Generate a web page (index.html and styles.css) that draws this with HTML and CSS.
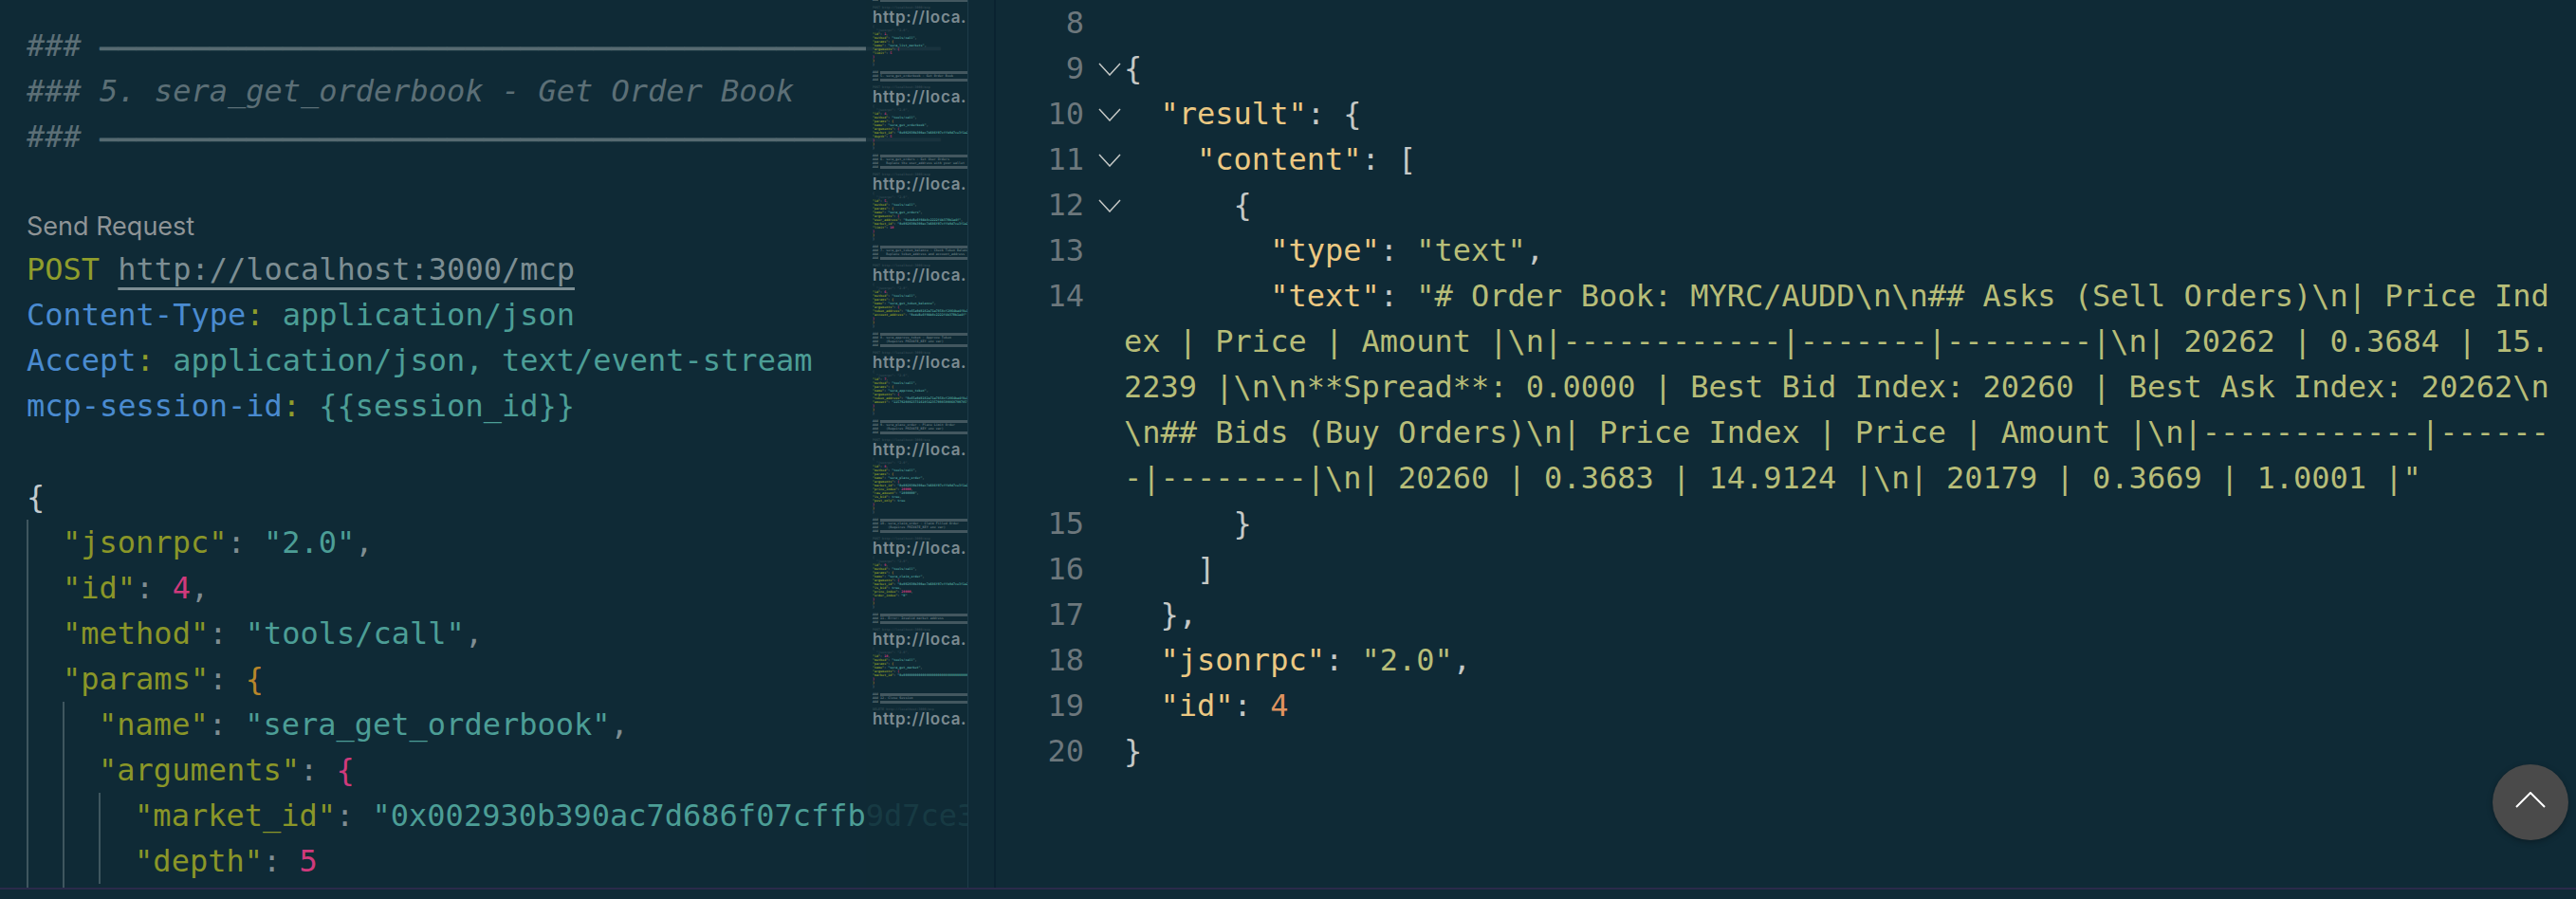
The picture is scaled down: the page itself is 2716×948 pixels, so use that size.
FILE: index.html
```html
<!DOCTYPE html>
<html lang="en">
<head>
<meta charset="utf-8">
<title>orderbook request</title>
<link rel="stylesheet" href="styles.css">
</head>
<body>
<div class="app">
  <main class="panes">
    <section class="pane-left">
      <div class="code">
        <div class="line cm">### <span class="rule">──────────────────────────────────────────────</span></div>
        <div class="line cm">### 5. sera_get_orderbook - Get Order Book</div>
        <div class="line cm">### <span class="rule">──────────────────────────────────────────────</span></div>
        <div class="line"></div>
        <div class="lens">Send Request</div>
        <div class="line"><span class="verb">POST</span> <span class="url">http://localhost:3000/mcp</span></div>
        <div class="line"><span class="hn">Content-Type</span><span class="hc">:</span> <span class="s">application/json</span></div>
        <div class="line"><span class="hn">Accept</span><span class="hc">:</span> <span class="s">application/json, text/event-stream</span></div>
        <div class="line"><span class="hn">mcp-session-id</span><span class="hc">:</span> <span class="s">{{session_id}}</span></div>
        <div class="line"></div>
        <div class="line"><span class="b0">{</span></div>
        <div class="guide">
          <div class="line"><span class="k">"jsonrpc"</span><span class="p">:</span> <span class="s">"2.0"</span><span class="p">,</span></div>
          <div class="line"><span class="k">"id"</span><span class="p">:</span> <span class="n">4</span><span class="p">,</span></div>
          <div class="line"><span class="k">"method"</span><span class="p">:</span> <span class="s">"tools/call"</span><span class="p">,</span></div>
          <div class="line"><span class="k">"params"</span><span class="p">:</span> <span class="b1">{</span></div>
          <div class="guide">
            <div class="line"><span class="k">"name"</span><span class="p">:</span> <span class="s">"sera_get_orderbook"</span><span class="p">,</span></div>
            <div class="line"><span class="k">"arguments"</span><span class="p">:</span> <span class="b2">{</span></div>
            <div class="guide">
              <div class="line"><span class="k">"market_id"</span><span class="p">:</span> <span class="s">"0x002930b390ac7d686f07cffb9d7ce3f1a2b4c5d6"</span><span class="p">,</span></div>
              <div class="line"><span class="k">"depth"</span><span class="p">:</span> <span class="n">5</span></div>
            </div>
            <div class="line"><span class="b2">}</span></div>
          </div>
          <div class="line"><span class="b1">}</span></div>
        </div>
      </div>

      <aside class="minimap">
        <div class="mm-inner">
          <div class="ml mc">### <span class="bar"></span></div>
          <div class="ml"></div>
          <div class="ml dim">POST http://localhost:3000/mcp</div>
          <div class="mm-link">http://loca.</div>
          <div class="ml dim">{</div>
          <div class="ml dim">  "jsonrpc": "2.0",</div>
          <div class="ml">  <span class="k">"id"</span>: <span class="n">1</span>,</div>
          <div class="ml">  <span class="k">"method"</span>: <span class="s">"tools/call"</span>,</div>
          <div class="ml">  <span class="k">"params"</span>: <span class="b1">{</span></div>
          <div class="ml">    <span class="k">"name"</span>: <span class="s">"sera_list_markets"</span>,</div>
          <div class="ml">    <span class="k">"arguments"</span>: <span class="b2">{</span></div>
          <div class="ml">      <span class="k">"limit"</span>: <span class="n">5</span></div>
          <div class="ml">    <span class="b2">}</span></div>
          <div class="ml">  <span class="b1">}</span></div>
          <div class="ml mc">}</div>
          <div class="ml"></div>

          <div class="ml mc">### <span class="bar"></span></div>
          <div class="ml mc">### 5. sera_get_orderbook - Get Order Book</div>
          <div class="ml mc">### <span class="bar"></span></div>
          <div class="ml"></div>
          <div class="ml dim">POST http://localhost:3000/mcp</div>
          <div class="mm-link">http://loca.</div>
          <div class="ml dim">{</div>
          <div class="ml dim">  "jsonrpc": "2.0",</div>
          <div class="ml">  <span class="k">"id"</span>: <span class="n">4</span>,</div>
          <div class="ml">  <span class="k">"method"</span>: <span class="s">"tools/call"</span>,</div>
          <div class="ml">  <span class="k">"params"</span>: <span class="b1">{</span></div>
          <div class="ml">    <span class="k">"name"</span>: <span class="s">"sera_get_orderbook"</span>,</div>
          <div class="ml">    <span class="k">"arguments"</span>: <span class="b2">{</span></div>
          <div class="ml">      <span class="k">"market_id"</span>: <span class="s">"0x002930b390ac7d686f07cffb9d7ce3f1a2b4"</span>,</div>
          <div class="ml">      <span class="k">"depth"</span>: <span class="n">5</span></div>
          <div class="ml">    <span class="b2">}</span></div>
          <div class="ml">  <span class="b1">}</span></div>
          <div class="ml mc">}</div>
          <div class="ml"></div>

          <div class="ml mc">### <span class="bar"></span></div>
          <div class="ml mc">### 6. sera_get_orders - Get User Orders</div>
          <div class="ml mc">###    Replace the user_address with your wallet</div>
          <div class="ml mc">### <span class="bar"></span></div>
          <div class="ml"></div>
          <div class="ml dim">POST http://localhost:3000/mcp</div>
          <div class="mm-link">http://loca.</div>
          <div class="ml dim">{</div>
          <div class="ml dim">  "jsonrpc": "2.0",</div>
          <div class="ml">  <span class="k">"id"</span>: <span class="n">5</span>,</div>
          <div class="ml">  <span class="k">"method"</span>: <span class="s">"tools/call"</span>,</div>
          <div class="ml">  <span class="k">"params"</span>: <span class="b1">{</span></div>
          <div class="ml">    <span class="k">"name"</span>: <span class="s">"sera_get_orders"</span>,</div>
          <div class="ml">    <span class="k">"arguments"</span>: <span class="b2">{</span></div>
          <div class="ml">      <span class="k">"user_address"</span>: <span class="s">"0xdeBe6f0Ab8c2222f4b37Rb1a4f"</span>,</div>
          <div class="ml">      <span class="k">"market_id"</span>: <span class="s">"0x002930b390ac7d686f07cffb9d7ce3f1a2b4"</span>,</div>
          <div class="ml">      <span class="k">"limit"</span>: <span class="n">10</span></div>
          <div class="ml">    <span class="b2">}</span></div>
          <div class="ml">  <span class="b1">}</span></div>
          <div class="ml mc">}</div>
          <div class="ml"></div>

          <div class="ml mc">### <span class="bar"></span></div>
          <div class="ml mc">### 7. sera_get_token_balance - Check Token Balance</div>
          <div class="ml mc">###    Replace token_address and account_address</div>
          <div class="ml mc">### <span class="bar"></span></div>
          <div class="ml"></div>
          <div class="ml dim">POST http://localhost:3000/mcp</div>
          <div class="mm-link">http://loca.</div>
          <div class="ml dim">{</div>
          <div class="ml dim">  "jsonrpc": "2.0",</div>
          <div class="ml">  <span class="k">"id"</span>: <span class="n">6</span>,</div>
          <div class="ml">  <span class="k">"method"</span>: <span class="s">"tools/call"</span>,</div>
          <div class="ml">  <span class="k">"params"</span>: <span class="b1">{</span></div>
          <div class="ml">    <span class="k">"name"</span>: <span class="s">"sera_get_token_balance"</span>,</div>
          <div class="ml">    <span class="k">"arguments"</span>: <span class="b2">{</span></div>
          <div class="ml">      <span class="k">"token_address"</span>: <span class="s">"0x65a0d8182a71a7858cf2864ba4f8e1"</span>,</div>
          <div class="ml">      <span class="k">"account_address"</span>: <span class="s">"0xdeBe6f0Ab8c2222f4b37Rb1a4f"</span></div>
          <div class="ml">    <span class="b2">}</span></div>
          <div class="ml">  <span class="b1">}</span></div>
          <div class="ml mc">}</div>
          <div class="ml"></div>

          <div class="ml mc">### <span class="bar"></span></div>
          <div class="ml mc">### 8. sera_approve_token - Approve Token</div>
          <div class="ml mc">###    (Requires PRIVATE_KEY env var)</div>
          <div class="ml mc">### <span class="bar"></span></div>
          <div class="ml"></div>
          <div class="ml dim">POST http://localhost:3000/mcp</div>
          <div class="mm-link">http://loca.</div>
          <div class="ml dim">{</div>
          <div class="ml dim">  "jsonrpc": "2.0",</div>
          <div class="ml">  <span class="k">"id"</span>: <span class="n">7</span>,</div>
          <div class="ml">  <span class="k">"method"</span>: <span class="s">"tools/call"</span>,</div>
          <div class="ml">  <span class="k">"params"</span>: <span class="b1">{</span></div>
          <div class="ml">    <span class="k">"name"</span>: <span class="s">"sera_approve_token"</span>,</div>
          <div class="ml">    <span class="k">"arguments"</span>: <span class="b2">{</span></div>
          <div class="ml">      <span class="k">"token_address"</span>: <span class="s">"0x65a0d8182a71a7858cf2864ba4f8e1"</span>,</div>
          <div class="ml">      <span class="k">"amount"</span>: <span class="s">"11579208923731619542357098500868790785"</span></div>
          <div class="ml">    <span class="b2">}</span></div>
          <div class="ml">  <span class="b1">}</span></div>
          <div class="ml mc">}</div>
          <div class="ml"></div>

          <div class="ml mc">### <span class="bar"></span></div>
          <div class="ml mc">### 9. sera_place_order - Place Limit Order</div>
          <div class="ml mc">###    (Requires PRIVATE_KEY env var)</div>
          <div class="ml mc">### <span class="bar"></span></div>
          <div class="ml"></div>
          <div class="ml dim">POST http://localhost:3000/mcp</div>
          <div class="mm-link">http://loca.</div>
          <div class="ml dim">{</div>
          <div class="ml dim">  "jsonrpc": "2.0",</div>
          <div class="ml">  <span class="k">"id"</span>: <span class="n">8</span>,</div>
          <div class="ml">  <span class="k">"method"</span>: <span class="s">"tools/call"</span>,</div>
          <div class="ml">  <span class="k">"params"</span>: <span class="b1">{</span></div>
          <div class="ml">    <span class="k">"name"</span>: <span class="s">"sera_place_order"</span>,</div>
          <div class="ml">    <span class="k">"arguments"</span>: <span class="b2">{</span></div>
          <div class="ml">      <span class="k">"market_id"</span>: <span class="s">"0x002930b390ac7d686f07cffb9d7ce3f1a2b4"</span>,</div>
          <div class="ml">      <span class="k">"price_index"</span>: <span class="n">20000</span>,</div>
          <div class="ml">      <span class="k">"raw_amount"</span>: <span class="s">"1000000"</span>,</div>
          <div class="ml">      <span class="k">"is_bid"</span>: <span class="s">true</span>,</div>
          <div class="ml">      <span class="k">"post_only"</span>: <span class="s">true</span></div>
          <div class="ml">    <span class="b2">}</span></div>
          <div class="ml">  <span class="b1">}</span></div>
          <div class="ml mc">}</div>
          <div class="ml"></div>

          <div class="ml mc">### <span class="bar"></span></div>
          <div class="ml mc">### 10. sera_claim_order - Claim Filled Order</div>
          <div class="ml mc">###     (Requires PRIVATE_KEY env var)</div>
          <div class="ml mc">### <span class="bar"></span></div>
          <div class="ml"></div>
          <div class="ml dim">POST http://localhost:3000/mcp</div>
          <div class="mm-link">http://loca.</div>
          <div class="ml dim">{</div>
          <div class="ml dim">  "jsonrpc": "2.0",</div>
          <div class="ml">  <span class="k">"id"</span>: <span class="n">9</span>,</div>
          <div class="ml">  <span class="k">"method"</span>: <span class="s">"tools/call"</span>,</div>
          <div class="ml">  <span class="k">"params"</span>: <span class="b1">{</span></div>
          <div class="ml">    <span class="k">"name"</span>: <span class="s">"sera_claim_order"</span>,</div>
          <div class="ml">    <span class="k">"arguments"</span>: <span class="b2">{</span></div>
          <div class="ml">      <span class="k">"market_id"</span>: <span class="s">"0x002930b390ac7d686f07cffb9d7ce3f1a2b4"</span>,</div>
          <div class="ml">      <span class="k">"is_bid"</span>: <span class="s">true</span>,</div>
          <div class="ml">      <span class="k">"price_index"</span>: <span class="n">20000</span>,</div>
          <div class="ml">      <span class="k">"order_index"</span>: <span class="s">"0"</span></div>
          <div class="ml">    <span class="b2">}</span></div>
          <div class="ml">  <span class="b1">}</span></div>
          <div class="ml mc">}</div>
          <div class="ml"></div>

          <div class="ml mc">### <span class="bar"></span></div>
          <div class="ml mc">### 11. Error: Invalid market address</div>
          <div class="ml mc">### <span class="bar"></span></div>
          <div class="ml"></div>
          <div class="ml dim">POST http://localhost:3000/mcp</div>
          <div class="mm-link">http://loca.</div>
          <div class="ml dim">{</div>
          <div class="ml dim">  "jsonrpc": "2.0",</div>
          <div class="ml">  <span class="k">"id"</span>: <span class="n">10</span>,</div>
          <div class="ml">  <span class="k">"method"</span>: <span class="s">"tools/call"</span>,</div>
          <div class="ml">  <span class="k">"params"</span>: <span class="b1">{</span></div>
          <div class="ml">    <span class="k">"name"</span>: <span class="s">"sera_get_market"</span>,</div>
          <div class="ml">    <span class="k">"arguments"</span>: <span class="b2">{</span></div>
          <div class="ml">      <span class="k">"market_id"</span>: <span class="s">"0x000000000000000000000000000000000000"</span></div>
          <div class="ml">    <span class="b2">}</span></div>
          <div class="ml">  <span class="b1">}</span></div>
          <div class="ml mc">}</div>
          <div class="ml"></div>

          <div class="ml mc">### <span class="bar"></span></div>
          <div class="ml mc">### 12. Close Session</div>
          <div class="ml mc">### <span class="bar"></span></div>
          <div class="ml"></div>
          <div class="ml dim">DELETE http://localhost:3000/mcp</div>
          <div class="mm-link">http://loca.</div>
        </div>
      </aside>
    </section>

    <section class="pane-right">
      <div class="row"><div class="num">8</div><div class="fold"></div><div class="src"></div></div>
      <div class="row"><div class="num">9</div><div class="fold"><svg class="chev" viewBox="0 0 24 14"><path d="M1 1l11 12L23 1"/></svg></div><div class="src"><span class="pn">{</span></div></div>
      <div class="row"><div class="num">10</div><div class="fold"><svg class="chev" viewBox="0 0 24 14"><path d="M1 1l11 12L23 1"/></svg></div><div class="src">  <span class="rk">"result"</span><span class="pn">: {</span></div></div>
      <div class="row"><div class="num">11</div><div class="fold"><svg class="chev" viewBox="0 0 24 14"><path d="M1 1l11 12L23 1"/></svg></div><div class="src">    <span class="rk">"content"</span><span class="pn">: [</span></div></div>
      <div class="row"><div class="num">12</div><div class="fold"><svg class="chev" viewBox="0 0 24 14"><path d="M1 1l11 12L23 1"/></svg></div><div class="src">      <span class="pn">{</span></div></div>
      <div class="row"><div class="num">13</div><div class="fold"></div><div class="src">        <span class="rk">"type"</span><span class="pn">:</span> <span class="rs">"text"</span><span class="pn">,</span></div></div>
      <div class="row"><div class="num">14</div><div class="fold"></div><div class="src wrap">        <span class="rk">"text"</span><span class="pn">:</span> <span class="rs">"# Order Book: MYRC/AUDD\n\n## Asks (Sell Orders)\n| Price Index | Price | Amount |\n|------------|-------|--------|\n| 20262 | 0.3684 | 15.2239 |\n\n**Spread**: 0.0000 | Best Bid Index: 20260 | Best Ask Index: 20262\n\n## Bids (Buy Orders)\n| Price Index | Price | Amount |\n|------------|-------|--------|\n| 20260 | 0.3683 | 14.9124 |\n| 20179 | 0.3669 | 1.0001 |"</span></div></div>
      <div class="row"><div class="num">15</div><div class="fold"></div><div class="src">      <span class="pn">}</span></div></div>
      <div class="row"><div class="num">16</div><div class="fold"></div><div class="src">    <span class="pn">]</span></div></div>
      <div class="row"><div class="num">17</div><div class="fold"></div><div class="src">  <span class="pn">},</span></div></div>
      <div class="row"><div class="num">18</div><div class="fold"></div><div class="src">  <span class="rk">"jsonrpc"</span><span class="pn">:</span> <span class="rs">"2.0"</span><span class="pn">,</span></div></div>
      <div class="row"><div class="num">19</div><div class="fold"></div><div class="src">  <span class="rk">"id"</span><span class="pn">:</span> <span class="rn">4</span></div></div>
      <div class="row"><div class="num">20</div><div class="fold"></div><div class="src"><span class="pn">}</span></div></div>

      <button class="to-top" type="button" aria-label="Back to top">
        <svg viewBox="0 0 32 17"><path d="M1 16L16 1l15 15"/></svg>
      </button>
    </section>
  </main>
  <footer class="status"></footer>
</div>
</body>
</html>
```

FILE: styles.css
```css
* { box-sizing: border-box; }

html, body {
  margin: 0;
  height: 100%;
  background: #0f2a36;
}

.app {
  display: flex;
  flex-direction: column;
  width: 2716px;
  height: 948px;
  overflow: hidden;
  font-family: "DejaVu Sans Mono", "Liberation Mono", monospace;
  font-size: 32px;
}

.panes {
  display: flex;
  height: 936px;
  overflow: hidden;
}

.status {
  height: 12px;
  border-top: 2px solid #2a2a4a;
}

/* left editor */
.pane-left {
  position: relative;
  width: 1050px;
  flex: none;
  overflow: hidden;
  border-right: 2px solid #0a2230;
}

.code {
  width: 1020px;
  padding: 24px 0 0 28px;
  overflow: hidden;
  height: 936px;
}

.line {
  height: 48px;
  line-height: 48px;
  white-space: pre;
}

.guide {
  border-left: 2px solid #3f565f;
  padding-left: calc(2ch - 2.5px);
}

.lens {
  height: 44px;
  line-height: 46px;
  font-family: Inter, "Noto Sans", sans-serif;
  font-size: 27px;
  color: #8e9496;
}

.cm { color: #5c6f76; font-style: italic; }
.rule {
  color: #566a71;
  vertical-align: -3px;
  text-shadow: 0 1px 0 #566a71;
}
.verb { color: #8f9d2c; }
.url {
  color: #7d8e93;
  text-decoration: underline;
  text-decoration-thickness: 3px;
  text-underline-offset: 8px;
  text-decoration-skip-ink: none;
}
.hn { color: #4a8bd0; }
.hc { color: #8f9d2c; }
.k { color: #8a9628; }
.s { color: #4c9e96; }
.n { color: #cf3a7c; }
.p { color: #7f8d92; }
.b0 { color: #c2cbcf; }
.b1 { color: #b8862a; }
.b2 { color: #cf3a7c; }

/* minimap */
.minimap {
  position: absolute;
  top: 0;
  left: 913px;
  width: 108px;
  height: 936px;
  padding-left: 7px;
  overflow: hidden;
  background: rgba(15, 42, 54, 0.86);
  border-right: 1px solid #1e3c49;
}

.mm-inner { margin-top: -2px; }

.ml {
  display: flex;
  height: 4px;
  line-height: 4px;
  font-size: 3.36px;
  font-weight: 700;
  white-space: pre;
  color: #7f8d92;
}

.mc { color: #5f7279; }
.dim { opacity: 0.3; color: #7f8d92; }

.bar {
  flex: 1;
  height: 3px;
  margin-top: 1px;
  background: #43575f;
}

.mm-link {
  height: 16px;
  line-height: 16px;
  font-family: Inter, "Liberation Sans", sans-serif;
  font-size: 17px;
  font-weight: 600;
  letter-spacing: 0.7px;
  white-space: nowrap;
  color: #7c8b91;
}

/* right editor */
.pane-right {
  position: relative;
  flex: 1;
}

.row { display: flex; }

.num {
  flex: none;
  width: 93px;
  height: 48px;
  line-height: 48px;
  text-align: right;
  color: #6c777c;
}

.fold {
  flex: none;
  width: 42px;
  height: 48px;
  padding: 18px 0 0 15px;
}

.chev {
  display: block;
  width: 24px;
  height: 14px;
  fill: none;
  stroke: #c5c8c6;
  stroke-width: 1.5;
}

.src {
  flex: none;
  width: 78ch;
  min-height: 48px;
  line-height: 48px;
  white-space: pre;
  color: #c5c8c6;
}

.wrap {
  white-space: pre-wrap;
  word-break: break-all;
}

.pn { color: #c5c8c6; }
.rk { color: #ebc882; }
.rs { color: #b7bd78; }
.rn { color: #de935f; }

.to-top {
  position: absolute;
  top: 806px;
  right: 8px;
  width: 80px;
  height: 80px;
  padding: 0;
  border: 0;
  border-radius: 50%;
  background: #4a4a4a;
  box-shadow: 0 2px 6px rgba(0, 0, 0, 0.3);
}

.to-top svg {
  display: block;
  width: 32px;
  height: 17px;
  margin: 0 auto 6px;
  fill: none;
  stroke: #fff;
  stroke-width: 2;
}
```
